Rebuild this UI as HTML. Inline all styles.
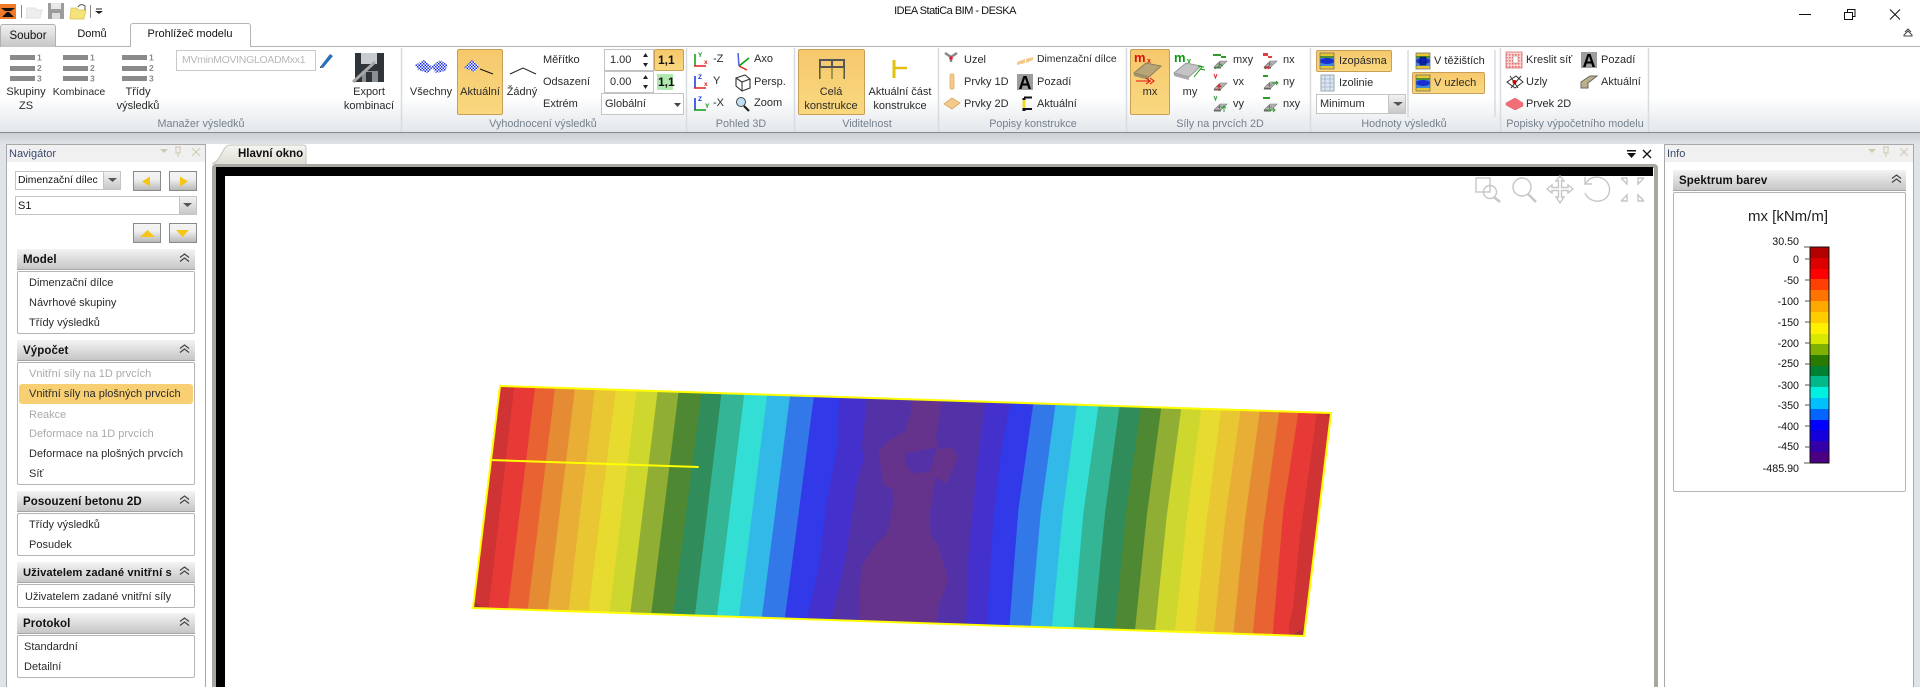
<!DOCTYPE html>
<html lang="cs"><head><meta charset="utf-8"><title>IDEA StatiCa BIM - DESKA</title>
<style>
html,body{margin:0;padding:0;width:1920px;height:687px;overflow:hidden;background:#fff}
body{position:relative;font-family:"Liberation Sans",sans-serif;font-size:11px;color:#222}
div{box-sizing:border-box}
.a{position:absolute}
.t{position:absolute;white-space:nowrap;line-height:14px;font-size:11px;color:#2a2a2a;z-index:5;margin-top:2px}
.c{transform:translateX(-50%)}
.g{color:#75808c;font-size:10.8px}
.n{margin-top:1px;font-size:10.7px;color:#111}
.hl{position:absolute;background:linear-gradient(#f6c86c,#f9d87f);border:1px solid #c99f58;border-radius:2px}
.hd{position:absolute;left:17px;width:178px;height:21px;background:linear-gradient(#f3f3f3,#c6c6c6);border-bottom:1px solid #a5a5a5;font-weight:bold;font-size:11.5px;line-height:22px;padding-left:6px;color:#111;letter-spacing:.1px;white-space:nowrap}
.bx{position:absolute;left:17px;width:178px;background:#fff;border:1px solid #b4b4b4;border-radius:2px}
.btn{position:absolute;background:linear-gradient(#f4f4f4 0,#f0f0f0 40%,#b8b8b8 100%);border:1px solid #8a8a8a;width:28px;height:20px}
.cb{position:absolute;background:#fff;border:1px solid #c4c4c4}
.cbb{position:absolute;right:0;top:0;bottom:0;width:17px;background:linear-gradient(#f2f2f2,#c8c8c8);border-left:1px solid #c4c4c4}
.dis{color:#aaa}
</style></head><body>

<!-- ribbon -->
<div class="a" style="left:0;top:46px;width:1920px;height:1px;background:#b4b4b4"></div>
<div class="a" style="left:0;top:47px;width:1920px;height:85px;background:linear-gradient(#fff 0,#fff 58%,#e3e7eb 100%)"></div>
<div class="a" style="left:0;top:132px;width:1920px;height:1px;background:#868b90"></div>
<div class="a" style="left:0;top:133px;width:1920px;height:554px;background:#e0e4e9"></div>
<div class="a" style="left:0;top:133px;width:1920px;height:11px;background:linear-gradient(#ccd0d3,#e0e4e9)"></div>

<!-- tabs -->
<div class="a" style="left:0;top:24px;width:56px;height:23px;background:linear-gradient(#f0f0f0,#c6c6c6);border:1px solid #b0b0b0;border-bottom:none;border-radius:3px 3px 0 0"></div>
<div class="t c" style="left:28px;top:27px;font-size:11.5px;color:#111">Soubor</div>
<div class="t c" style="left:92px;top:25px;color:#111">Domů</div>
<div class="a" style="left:130px;top:23px;width:121px;height:24px;background:#fff;border:1px solid #b4b4b4;border-bottom:none;border-radius:3px 3px 0 0"></div>
<div class="t c" style="left:190px;top:25px;color:#111">Prohlížeč modelu</div>
<div class="t c" style="left:955px;top:2px;font-size:11px;letter-spacing:-.5px;color:#111">IDEA StatiCa BIM - DESKA</div>

<!-- ribbon highlights -->
<div class="hl" style="left:457px;top:49px;width:46px;height:66px"></div>
<div class="hl" style="left:654px;top:49px;width:30px;height:22px"></div>
<div class="a" style="left:657px;top:74px;width:16px;height:16px;background:#b0e8b0"></div>
<div class="hl" style="left:798px;top:49px;width:67px;height:66px"></div>
<div class="hl" style="left:1130px;top:49px;width:40px;height:66px"></div>
<div class="hl" style="left:1316px;top:50px;width:76px;height:22px"></div>
<div class="hl" style="left:1412px;top:72px;width:73px;height:22px"></div>

<!-- ribbon fields -->
<div class="cb" style="left:176px;top:50px;width:140px;height:21px;border-color:#c8c8c8"></div>
<div class="t" style="left:182px;top:51px;color:#b8b8b8;font-size:10.5px;letter-spacing:-.3px">MVminMOVINGLOADMxx1</div>
<div class="cb" style="left:604px;top:49px;width:50px;height:22px"></div>
<div class="cb" style="left:604px;top:71px;width:50px;height:22px"></div>
<div class="t" style="left:610px;top:51px">1.00</div>
<div class="t" style="left:610px;top:73px">0.00</div>
<div class="t" style="left:658px;top:51px;font-weight:bold;font-size:12px;color:#111">1,1</div>
<div class="t" style="left:658px;top:73px;font-weight:bold;font-size:12px;color:#111">1,1</div>
<div class="cb" style="left:601px;top:93px;width:83px;height:22px"></div>
<div class="t" style="left:605px;top:95px">Globální</div>
<div class="cb" style="left:1316px;top:94px;width:90px;height:20px"><div class="cbb"></div></div>
<div class="t" style="left:1320px;top:95px">Minimum</div>

<!-- ribbon labels -->
<div class="t c" style="left:26px;top:83px">Skupiny</div><div class="t c" style="left:26px;top:97px">ZS</div>
<div class="t c" style="left:79px;top:83px;font-size:10.5px">Kombinace</div>
<div class="t c" style="left:138px;top:83px">Třídy</div><div class="t c" style="left:138px;top:97px">výsledků</div>
<div class="t c" style="left:369px;top:83px">Export</div><div class="t c" style="left:369px;top:97px">kombinací</div>
<div class="t c g" style="left:201px;top:115px">Manažer výsledků</div>
<div class="t c" style="left:431px;top:83px">Všechny</div>
<div class="t c" style="left:480px;top:83px">Aktuální</div>
<div class="t c" style="left:522px;top:83px">Žádný</div>
<div class="t" style="left:543px;top:51px">Měřítko</div>
<div class="t" style="left:543px;top:73px">Odsazení</div>
<div class="t" style="left:543px;top:95px">Extrém</div>
<div class="t c g" style="left:543px;top:115px">Vyhodnocení výsledků</div>
<div class="t" style="left:713px;top:50px">-Z</div>
<div class="t" style="left:713px;top:72px">Y</div>
<div class="t" style="left:713px;top:94px">-X</div>
<div class="t" style="left:754px;top:50px">Axo</div>
<div class="t" style="left:754px;top:73px">Persp.</div>
<div class="t" style="left:754px;top:94px">Zoom</div>
<div class="t c g" style="left:741px;top:115px">Pohled 3D</div>
<div class="t c" style="left:831px;top:83px">Celá</div><div class="t c" style="left:831px;top:97px">konstrukce</div>
<div class="t c" style="left:900px;top:83px">Aktuální část</div><div class="t c" style="left:900px;top:97px">konstrukce</div>
<div class="t c g" style="left:867px;top:115px">Viditelnost</div>
<div class="t" style="left:964px;top:51px">Uzel</div>
<div class="t" style="left:964px;top:73px">Prvky 1D</div>
<div class="t" style="left:964px;top:95px">Prvky 2D</div>
<div class="t" style="left:1037px;top:51px;font-size:10.4px">Dimenzační dílce</div>
<div class="t" style="left:1037px;top:73px">Pozadí</div>
<div class="t" style="left:1037px;top:95px">Aktuální</div>
<div class="t c g" style="left:1033px;top:115px">Popisy konstrukce</div>
<div class="t c" style="left:1150px;top:83px">mx</div>
<div class="t c" style="left:1190px;top:83px">my</div>
<div class="t" style="left:1233px;top:51px">mxy</div>
<div class="t" style="left:1233px;top:73px">vx</div>
<div class="t" style="left:1233px;top:95px">vy</div>
<div class="t" style="left:1283px;top:51px">nx</div>
<div class="t" style="left:1283px;top:73px">ny</div>
<div class="t" style="left:1283px;top:95px">nxy</div>
<div class="t c g" style="left:1220px;top:115px">Síly na prvcích 2D</div>
<div class="t" style="left:1339px;top:52px">Izopásma</div>
<div class="t" style="left:1339px;top:74px">Izolinie</div>
<div class="t c g" style="left:1404px;top:115px">Hodnoty výsledků</div>
<div class="t" style="left:1434px;top:52px">V těžištích</div>
<div class="t" style="left:1434px;top:74px">V uzlech</div>
<div class="t" style="left:1526px;top:51px">Kreslit síť</div>
<div class="t" style="left:1526px;top:73px">Uzly</div>
<div class="t" style="left:1526px;top:95px">Prvek 2D</div>
<div class="t" style="left:1601px;top:51px">Pozadí</div>
<div class="t" style="left:1601px;top:73px">Aktuální</div>
<div class="t c g" style="left:1575px;top:115px">Popisky výpočetního modelu</div>

<!-- left navigator -->
<div class="a" style="left:6px;top:144px;width:200px;height:543px;background:#fff;border:1px solid #a8a8a8;border-bottom:none"></div>
<div class="a" style="left:7px;top:145px;width:198px;height:17px;background:#f0f0f0"></div>
<div class="t" style="left:9px;top:146px;margin-top:1px;color:#3b4a6b">Navigátor</div>
<div class="cb" style="left:15px;top:171px;width:106px;height:19px"><div class="cbb"></div></div>
<div class="t" style="left:18px;top:172px;color:#111;font-size:10.4px">Dimenzační dílec</div>
<div class="cb" style="left:15px;top:196px;width:182px;height:19px"><div class="cbb"></div></div>
<div class="t" style="left:18px;top:197px;color:#111">S1</div>
<div class="btn" style="left:133px;top:171px"></div>
<div class="btn" style="left:169px;top:171px"></div>
<div class="btn" style="left:133px;top:223px"></div>
<div class="btn" style="left:169px;top:223px"></div>

<div class="hd" style="top:249px">Model</div>
<div class="bx" style="top:271px;height:63px"></div>
<div class="t" style="left:29px;top:274px">Dimenzační dílce</div>
<div class="t" style="left:29px;top:294px">Návrhové skupiny</div>
<div class="t" style="left:29px;top:314px">Třídy výsledků</div>

<div class="hd" style="top:340px">Výpočet</div>
<div class="bx" style="top:362px;height:123px"></div>
<div class="a" style="left:19px;top:384px;width:174px;height:20px;background:#f8cf73;border-radius:3px"></div>
<div class="t dis" style="left:29px;top:365px">Vnitřní síly na 1D prvcích</div>
<div class="t" style="left:29px;top:385px">Vnitřní síly na plošných prvcích</div>
<div class="t dis" style="left:29px;top:406px">Reakce</div>
<div class="t dis" style="left:29px;top:425px">Deformace na 1D prvcích</div>
<div class="t" style="left:29px;top:445px">Deformace na plošných prvcích</div>
<div class="t" style="left:29px;top:465px">Síť</div>

<div class="hd" style="top:491px">Posouzení betonu 2D</div>
<div class="bx" style="top:513px;height:43px"></div>
<div class="t" style="left:29px;top:516px">Třídy výsledků</div>
<div class="t" style="left:29px;top:536px">Posudek</div>

<div class="hd" style="top:562px;font-size:11.2px;width:178px">Uživatelem zadané vnitřní s</div>
<div class="bx" style="top:584px;height:24px"></div>
<div class="t" style="left:25px;top:588px">Uživatelem zadané vnitřní síly</div>

<div class="hd" style="top:613px">Protokol</div>
<div class="bx" style="top:635px;height:43px"></div>
<div class="t" style="left:24px;top:638px">Standardní</div>
<div class="t" style="left:24px;top:658px">Detailní</div>

<!-- centre doc area -->
<div class="a" style="left:206px;top:144px;width:1458px;height:543px;background:#fff"></div>
<div class="a" style="left:212px;top:164px;width:1446px;height:523px;background:#fff;border:4px solid #a9a79f;border-bottom:none;border-radius:4px 4px 0 0"></div>
<div class="a" style="left:216px;top:167px;width:1437px;height:9px;background:#000"></div>
<div class="a" style="left:216px;top:167px;width:9px;height:520px;background:#000"></div>
<div class="t" style="left:238px;top:147px;margin-top:0;font-weight:bold;color:#111;font-size:11.5px;z-index:6">Hlavní okno</div>

<!-- right info -->
<div class="a" style="left:1664px;top:144px;width:250px;height:543px;background:#fff;border:1px solid #a8a8a8;border-bottom:none"></div>
<div class="a" style="left:1665px;top:145px;width:248px;height:17px;background:#f0f0f0"></div>
<div class="t" style="left:1667px;top:147px;margin-top:0;color:#3b4a6b">Info</div>
<div class="hd" style="left:1673px;top:170px;width:233px">Spektrum barev</div>
<div class="a" style="left:1673px;top:192px;width:233px;height:300px;background:#fff;border:1px solid #b4b4b4;border-radius:2px"></div>
<div class="t c" style="left:1788px;top:209px;margin-top:0;font-size:15px;line-height:16px;color:#222">mx [kNm/m]</div>
<div class="t n" style="right:121px;top:234px">30.50</div>
<div class="t n" style="right:121px;top:252px">0</div>
<div class="t n" style="right:121px;top:273px">-50</div>
<div class="t n" style="right:121px;top:294px">-100</div>
<div class="t n" style="right:121px;top:315px">-150</div>
<div class="t n" style="right:121px;top:336px">-200</div>
<div class="t n" style="right:121px;top:356px">-250</div>
<div class="t n" style="right:121px;top:378px">-300</div>
<div class="t n" style="right:121px;top:398px">-350</div>
<div class="t n" style="right:121px;top:419px">-400</div>
<div class="t n" style="right:121px;top:439px">-450</div>
<div class="t n" style="right:121px;top:461px">-485.90</div>

<svg class="a" style="left:0;top:0;z-index:3" width="1920" height="687" viewBox="0 0 1920 687" font-family="Liberation Sans,sans-serif">
<defs>
<clipPath id="pl"><polygon points="500,386 1331,413 1304,636 473,608"/></clipPath>
<pattern id="chk" width="3" height="3" patternUnits="userSpaceOnUse"><rect width="3" height="3" fill="#fff"/><rect width="1.5" height="1.5" fill="#1a2fe0"/><rect x="1.5" y="1.5" width="1.5" height="1.5" fill="#1a2fe0"/></pattern>
<pattern id="grid" width="3" height="3" patternUnits="userSpaceOnUse"><rect width="3" height="3" fill="#fbd0d0"/><rect width="1.5" height="1.5" fill="#ee6a6a"/></pattern>
<linearGradient id="tabg" x1="0" y1="0" x2="0" y2="1"><stop offset="0" stop-color="#f6f6f2"/><stop offset="1" stop-color="#dedcd4"/></linearGradient>
<g id="bars"><g fill="#8a8a8a"><rect x="0" y="0" width="25" height="5"/><rect x="0" y="11" width="25" height="5"/><rect x="0" y="21" width="25" height="5"/></g></g>
<g id="chev"><path d="M0,4.500L4.500,1 9,4.500M0,8.500L4.500,5 9,8.500" fill="none" stroke="#444" stroke-width="1.200"/></g>
<g id="mini"><polygon points="1,13 7,7 14,7 8,13" fill="#b4b4b4" stroke="#777" stroke-width=".6"/><path d="M1,13h7v1.500H1z" fill="#666"/><path d="M4,10h5M6.500,8v4" stroke="#555" stroke-width=".6"/></g>
<g id="colmap"><rect width="14" height="16" fill="#3d8ad8"/><rect y="0" width="14" height="3" fill="#e8c733"/><rect y="3" width="14" height="2" fill="#4f8f33"/><ellipse cx="7" cy="8" rx="7" ry="3" fill="#1a2fd0"/><rect y="13" width="14" height="3" fill="#e8c733"/><rect width="14" height="16" fill="none" stroke="#666" stroke-width=".7"/></g>
</defs>

<!-- group separators -->
<g stroke="#d8dbdf" stroke-width="1.5"><path d="M401.500,48V132M686.500,48V132M794.500,48V132M938.500,48V132M1126.500,48V132M1310.500,48V132M1500.500,48V132M1648.500,48V132"/><path d="M1408,50V117M1495,50V117"/></g>

<!-- QAT -->
<rect x="0" y="4" width="16" height="15" fill="#f07a2a"/><path d="M1,8h14l-4,3h-6zM2,17l5,-5h2l5,5z" fill="#111"/>
<path d="M21.500,5V18M90.500,5V18" stroke="#888"/>
<path d="M27,8h8l2,2h5l-2,8H26z" fill="#eee" stroke="#e2e2e2"/>
<rect x="48" y="3" width="16" height="16" fill="#9c9c9c"/><rect x="51" y="3" width="10" height="6" fill="#e8e8e8"/><rect x="52" y="13" width="8" height="6" fill="#dedede"/>
<path d="M71,8h6l1,2h8l-2,9H70z" fill="#f6e27a" stroke="#d8c050" stroke-width=".7"/><path d="M78,7c2,-3 5,-3 7,-1v4" fill="none" stroke="#555"/>
<path d="M96,9h6" stroke="#222"/><path d="M95,11h8l-4,3z" fill="#222"/>

<!-- window -->
<path d="M1799,14.500h12" stroke="#111"/>
<path d="M1844.500,12.500h8v7h-8zM1847.500,12V9.500h7.500v7h-2" fill="none" stroke="#111"/>
<path d="M1890,9.500l10,10M1900,9.500l-10,10" stroke="#111" stroke-width="1"/>
<path d="M1904,35l4,-4 4,4v1h-8zM1905,32l3,-3 3,3" fill="none" stroke="#444"/>

<!-- manager icons -->
<use href="#bars" x="10" y="55"/><use href="#bars" x="63" y="55"/><use href="#bars" x="122" y="55"/>
<g font-size="8.500" font-weight="bold" fill="#8a8a8a"><text x="37" y="60.500">1</text><text x="37" y="71">2</text><text x="37" y="81.500">3</text><text x="90" y="60.500">1</text><text x="90" y="71">2</text><text x="90" y="81.500">3</text><text x="149" y="60.500">1</text><text x="149" y="71">2</text><text x="149" y="81.500">3</text></g>
<path d="M320,67l10,-13 3,2 -10,12z" fill="#2a70b8"/><path d="M320,68l0,-1 2,1z" fill="#111"/>
<path d="M355,53h29v29h-29z" fill="#2f3438"/><rect x="361" y="53" width="16" height="11" fill="#c9ccce"/><rect x="362" y="71" width="16" height="11" fill="#8c8f92"/><rect x="366" y="72" width="6" height="10" fill="#2f3438"/><path d="M353,82l22,-20" stroke="#a8a8a8" stroke-width="3"/>

<!-- results -->
<path d="M415,65l9,-5 9,7 -5,6 -10,-3z" fill="url(#chk)"/><path d="M431,67l9,-7 8,5 -3,6 -9,2z" fill="url(#chk)"/>
<path d="M464,68l8,-8 7,6 -4,6z" fill="url(#chk)"/>
<path d="M480,69l13,5" stroke="#111"/>
<path d="M510,74l13,-6 13,6" fill="none" stroke="#222"/>
<path d="M643,57l2.500,-4 2.500,4zM643,63l2.500,4 2.500,-4zM643,79l2.500,-4 2.500,4zM643,85l2.500,4 2.500,-4z" fill="#222"/>
<path d="M674,103h7l-3.500,4z" fill="#444"/>

<!-- view icons -->
<g stroke-width="1.500" fill="none"><path d="M695,54V66" stroke="#0a9a0a"/><path d="M694,66h12" stroke="#e02020"/><path d="M695,76V88" stroke="#1030e0"/><path d="M694,88h12" stroke="#e02020"/><path d="M695,98V110" stroke="#1030e0"/><path d="M694,110h12" stroke="#0a9a0a"/>
<path d="M739,66l-1,-13" stroke="#5060e0"/><path d="M739,66l10,-8" stroke="#0a9a0a"/><path d="M739,66l8,4" stroke="#e02020"/></g>
<circle cx="741" cy="102" r="4.500" fill="#bfe0f4" stroke="#444"/><path d="M744,106l5,5" stroke="#222" stroke-width="2.200"/>
<path d="M736,78l9,-3 5,4v9l-8,3 -6,-5zM736,78l6,4 8,-3M742,82v9" fill="none" stroke="#333" stroke-width="1.100"/>
<g font-size="6.500" font-weight="bold"><text x="698" y="57" fill="#0a9a0a">Y</text><text x="704" y="64" fill="#e02020">x</text><text x="698" y="79" fill="#1030e0">Z</text><text x="704" y="86" fill="#e02020">x</text><text x="698" y="101" fill="#1030e0">Z</text><text x="705" y="108" fill="#0a9a0a">Y</text></g>

<!-- visibility -->
<path d="M820,79V60h24v19M832,79V60M820,67h24" fill="none" stroke="#555" stroke-width="2"/><path d="M821,79V68M843,79V68M832,79V68" stroke="#ead23a" stroke-width="1"/>
<path d="M894,60V78" stroke="#e0c010" stroke-width="3"/><path d="M895,68h12" stroke="#e0c010" stroke-width="2.500"/>

<!-- popisy -->
<path d="M945,53l6,4 6,-4M951,57v5" stroke="#888" stroke-width="2.500" fill="none"/><circle cx="951" cy="58" r="1.800" fill="#e02030"/>
<rect x="950" y="74" width="4" height="15" rx="1.500" fill="#f5cc90" stroke="#dda050" stroke-width=".7"/>
<path d="M944,104l8,-6 8,5 -8,6z" fill="#f4c989" stroke="#d8a45e" stroke-width=".8"/>
<path d="M1017,62l8,-3v4l-8,2zM1026,59l7,-2v3l-7,3z" fill="#f5c78a"/>
<rect x="1017" y="74" width="16" height="16" fill="#9d9d9d"/>
<text x="1025" y="89" text-anchor="middle" font-size="18" font-weight="bold" fill="#000">A</text>
<path d="M1024,98V111" stroke="#111" stroke-width="3"/><path d="M1024,100V108" stroke="#f0dc1c" stroke-width="3"/><path d="M1024,97.500h8M1024,109h8" stroke="#111" stroke-width="2"/>

<!-- forces -->
<text x="1134" y="62" font-size="13" font-weight="bold" fill="#e01010">m</text><text x="1147" y="63" font-size="7" font-weight="bold" fill="#e01010">x</text>
<polygon points="1134,73 1146,63 1161,66 1149,77" fill="#b8a578" stroke="#8c7d5c"/><polygon points="1134,73 1149,77 1149,80 1134,76" fill="#a19168"/>
<path d="M1136,81h15" stroke="#e01010"/><path d="M1146,78l4,3 -4,3M1150,78l4,3 -4,3" fill="none" stroke="#e01010"/>
<text x="1174" y="62" font-size="13" font-weight="bold" fill="#0a9a0a">m</text><text x="1187" y="63" font-size="7" font-weight="bold" fill="#0a9a0a">y</text>
<polygon points="1174,73 1186,63 1201,66 1189,77" fill="#c4c4c4" stroke="#999"/><polygon points="1174,73 1189,77 1189,80 1174,76" fill="#aaa"/>
<path d="M1194,77l8,-10M1198,66l6,1M1200,69l5,1" stroke="#0a9a0a" fill="none"/>

<use href="#mini" x="1213" y="54"/><use href="#mini" x="1213" y="76"/><use href="#mini" x="1213" y="97"/>
<use href="#mini" x="1263" y="54"/><use href="#mini" x="1263" y="75"/><use href="#mini" x="1263" y="97"/>
<!-- mxy --><path d="M1213,54h8v2h-8zM1221,56h5v2h-5z" fill="#2e9a2e"/><path d="M1215,69l5,-4M1219,64l4,2" stroke="#2e9a2e" fill="none"/>
<!-- vx --><path d="M1214,74l1.500,4 1.500,-4" stroke="#e02020" fill="none"/><path d="M1219,84v7M1217,87l2,-2 2,2" stroke="#e02020" fill="none"/>
<!-- vy --><path d="M1214,96l1.500,4 1.500,-4" stroke="#2e9a2e" fill="none"/><path d="M1224,112v-6M1222,108l2,-2 2,2" stroke="#2e9a2e" fill="none"/>
<!-- nx --><path d="M1263,53h5v3h-5zM1268,56h4v2h-4z" fill="#e04040"/><path d="M1265,69l4,-3M1265,66l4,3" stroke="#e02020" fill="none"/>
<!-- ny --><path d="M1263,75h5v2h-5z" fill="#2e9a2e"/><path d="M1272,83h6M1276,81l2,2 -2,2" stroke="#2e9a2e" fill="none"/>
<!-- nxy --><path d="M1263,97h7v2h-7z" fill="#2e9a2e"/><path d="M1265,110h10M1273,108l2,2 -2,2" stroke="#2e9a2e" fill="none"/>

<!-- values -->
<use href="#colmap" x="1320" y="53"/>
<rect x="1321" y="75" width="13" height="16" fill="#dde6f0" stroke="#9aa"/><path d="M1321,79h13M1321,83h13M1321,87h13M1325,75v16M1330,75v16" stroke="#8a9fc8" stroke-width=".6"/>
<path d="M1393,102h10l-5,4z" fill="#555"/>
<use href="#colmap" x="1416" y="53"/><rect x="1420" y="57" width="6" height="8" fill="#0b1fb0" stroke="#111" stroke-width=".5"/>
<use href="#colmap" x="1416" y="75"/>
<rect x="1506" y="52" width="16" height="16" fill="url(#grid)" stroke="#d88"/><rect x="1513" y="56" width="5" height="7" fill="#fff" stroke="#888" stroke-width=".5"/>
<path d="M1507,82l9,-6 7,6 -8,6zM1510,76l8,12M1521,76l-10,12" fill="none" stroke="#333"/><circle cx="1514.500" cy="82" r="2" fill="#c00"/>
<path d="M1506,103l9,-5 8,5v3l-8,4 -9,-5z" fill="#f36f78" stroke="#e0505a" stroke-width=".5"/>
<rect x="1581" y="52" width="16" height="16" fill="#9d9d9d"/>
<text x="1589" y="67" text-anchor="middle" font-size="18" font-weight="bold" fill="#000">A</text>
<path d="M1581,82l9,-6h7l-9,7v5h-7z" fill="#bcb08a" stroke="#666"/>

<!-- nav icons -->
<path d="M142,181.500l8,-5v10z" fill="#f5c518"/><path d="M188,181.500l-8,-5v10z" fill="#f5c518"/>
<path d="M147.500,230l7.500,7h-15z" fill="#f5c518"/><path d="M182.500,237l6.500,-7h-13z" fill="#f5c518"/>
<path d="M108,178h9l-4.500,4z" fill="#555"/><path d="M183,203h9l-4.500,4z" fill="#555"/>
<path d="M160,149h8l-4,4z" fill="#cfc9b0"/><path d="M175,147h6M176,147v6h4v-6M178,153v4" fill="none" stroke="#cfc9b0"/><path d="M192,148l8,8M200,148l-8,8" stroke="#cfc9b0"/>
<path d="M1868,149h8l-4,4z" fill="#cfc9b0"/><path d="M1883,147h6M1884,147v6h4v-6M1886,153v4" fill="none" stroke="#cfc9b0"/><path d="M1900,148l8,8M1908,148l-8,8" stroke="#cfc9b0"/>
<use href="#chev" x="180" y="253"/><use href="#chev" x="180" y="344"/><use href="#chev" x="180" y="495"/><use href="#chev" x="180" y="566"/><use href="#chev" x="180" y="617"/><use href="#chev" x="1892" y="174"/>

<!-- doc tab -->
<path d="M212,164c4,-2 6,-4 10,-11 3,-6 5,-8 9,-8h72q3,0 3,3v16" fill="url(#tabg)" stroke="#c4c3bb"/>
<path d="M1627,150h9v1.500h-9zM1627,153h9l-4.500,5z" fill="#111"/>
<path d="M1643,150l8,8M1651,150l-8,8" stroke="#111" stroke-width="1.300"/>

<!-- canvas tools -->
<g fill="none" stroke="#c6c6c6" stroke-width="1.400">
<rect x="1476" y="178" width="14" height="14"/><circle cx="1490" cy="192" r="6.500"/><path d="M1494,197l6,5" stroke-width="2.500"/>
<circle cx="1522" cy="187" r="9"/><path d="M1528,194l8,8" stroke-width="2.500"/>
<path d="M1560,176l4,5h-2.500v6.500H1568V185l5,4 -5,4v-2.500h-6.500V197h2.500l-4,6 -4,-6h2.500v-6.500H1552V193l-5,-4 5,-4v2.500h6.500V181H1556z"/>
<path d="M1586,183c4,-7 14,-8 20,-2s4,16 -3,19 -15,0 -18,-7M1585,177v7h7"/>
<path d="M1621,178h6v6l-6,-6M1644,178h-6v6l6,-6M1621,201h6v-6l-6,6M1644,201h-6v-6l6,6"/>
</g>

<!-- plate -->
<g clip-path="url(#pl)">
<rect x="460" y="380" width="900" height="270" fill="#cf3333"/>
<polygon fill="#e73a36" points="515,380 485,640 1400,640 1400,380"/>
<polygon fill="#e96232" points="536,380 504,640 1400,640 1400,380"/>
<polygon fill="#e58b33" points="556,380 524,640 1400,640 1400,380"/>
<polygon fill="#e8ae35" points="576,380 544,640 1400,640 1400,380"/>
<polygon fill="#e8c733" points="596,380 565,640 1400,640 1400,380"/>
<polygon fill="#e8db30" points="617,380 585,640 1400,640 1400,380"/>
<polygon fill="#cdd72e" points="638,380 606,640 1400,640 1400,380"/>
<polygon fill="#90ae33" points="659,380 627,640 1400,640 1400,380"/>
<polygon fill="#4f8833" points="680,380 648,640 1400,640 1400,380"/>
<polygon fill="#308c5a" points="703,380 670,640 1400,640 1400,380"/>
<polygon fill="#33b596" points="723,380 692,640 1400,640 1400,380"/>
<polygon fill="#33dfd5" points="746,380 714,640 1400,640 1400,380"/>
<polygon fill="#33b9e8" points="769,380 736,640 1400,640 1400,380"/>
<polygon fill="#3278e8" points="792,380 759,640 1400,640 1400,380"/>
<polygon fill="#3239e8" points="816,380 782,640 1400,640 1400,380"/>
<polygon fill="#4430cc" points="840,380 839.300,398 836.700,450 826.700,503 818.300,570 807.300,618 804,640 1400,640 1400,380"/>
<polygon fill="#5332a8" points="868,380 866.700,400 861.700,447 864,458 856.700,483 850,530 843.300,570 831.700,618 827,640 1400,640 1400,380"/>
<g transform="translate(880,370) scale(.33333)">
<polygon fill="#66338c" points="98,60 98,90 90,140 75,185 30,210 -5,245 10,345 35,355 42,400 20,490 -15,525 -55,590 -60,650 -63,750 -65,820 172,820 172,760 175,710 205,630 175,530 150,490 150,420 165,335 175,238 168,205 185,92 188,60"/>
<polygon fill="#5332a8" points="75,250 170,232 150,305 100,310 80,290"/>
<polygon fill="#66338c" points="175,238 215,232 235,260 200,340 150,310"/>
<polygon fill="#4430cc" points="318,60 315,98 290,300 265,560 258,765 258,820 1500,820 1500,60"/>
<polygon fill="#3239e8" points="395,60 390,100 360,270 340,450 325,680 323,820 1500,820 1500,60"/>
<polygon fill="#3278e8" points="465,60 460,100 415,420 388,770 386,820 1500,820 1500,60"/>
<polygon fill="#33b9e8" points="532,60 527,100 482,430 452,770 450,820 1500,820 1500,60"/>
<polygon fill="#33dfd5" points="596,60 591,105 548,430 516,770 514,820 1500,820 1500,60"/>
<polygon fill="#33b596" points="660,60 655,110 610,430 580,775 578,820 1500,820 1500,60"/>
<polygon fill="#308c5a" points="723,60 718,112 675,430 642,775 638,820 1500,820 1500,60"/>
<polygon fill="#4f8833" points="787,60 782,115 738,430 705,778 700,820 1500,820 1500,60"/>
<polygon fill="#90ae33" points="848,60 843,118 800,440 765,782 761,820 1500,820 1500,60"/>
<polygon fill="#cdd72e" points="908,60 903,120 860,440 825,785 821,820 1500,820 1500,60"/>
<polygon fill="#e8db30" points="968,60 963,122 920,450 885,785 881,820 1500,820 1500,60"/>
<polygon fill="#e8c733" points="1028,60 1023,122 980,450 945,788 941,820 1500,820 1500,60"/>
<polygon fill="#e8ae35" points="1086,60 1081,125 1035,450 1002,790 998,820 1500,820 1500,60"/>
<polygon fill="#e58b33" points="1144,60 1139,125 1095,450 1060,792 1056,820 1500,820 1500,60"/>
<polygon fill="#e96232" points="1202,60 1197,128 1150,470 1118,795 1114,820 1500,820 1500,60"/>
<polygon fill="#e73a36" points="1260,60 1255,128 1210,420 1178,795 1174,820 1500,820 1500,60"/>
<polygon fill="#cf3333" points="1315,60 1310,130 1260,500 1238,720 1227,765 1227,820 1500,820 1500,60"/>
<polygon fill="#a83038" points="1335,125 1352,125 1352,155"/>
<polygon fill="#a83038" points="1227,800 1272,800 1272,775"/>
</g>
<polygon fill="#a83038" points="473,600 485,610 472,612"/>
</g>
<polygon points="500,386 1331,413 1304,636 473,608" fill="none" stroke="#ffff00" stroke-width="2"/>
<path d="M490.700,460L698.700,467" stroke="#ffff00" stroke-width="2"/>

<!-- legend -->
<g shape-rendering="crispEdges">
<rect x="1810" y="247" width="19" height="11" fill="#b30000"/>
<rect x="1810" y="258" width="19" height="11" fill="#dc0000"/>
<rect x="1810" y="269" width="19" height="10" fill="#ff0000"/>
<rect x="1810" y="279" width="19" height="11" fill="#ff4000"/>
<rect x="1810" y="290" width="19" height="11" fill="#ff7300"/>
<rect x="1810" y="301" width="19" height="11" fill="#ffa800"/>
<rect x="1810" y="312" width="19" height="11" fill="#ffcc00"/>
<rect x="1810" y="323" width="19" height="11" fill="#fff000"/>
<rect x="1810" y="334" width="19" height="10" fill="#d9e800"/>
<rect x="1810" y="344" width="19" height="11" fill="#80b000"/>
<rect x="1810" y="355" width="19" height="11" fill="#2a7a00"/>
<rect x="1810" y="366" width="19" height="10" fill="#008033"/>
<rect x="1810" y="376" width="19" height="11" fill="#00b88a"/>
<rect x="1810" y="387" width="19" height="11" fill="#00f0e0"/>
<rect x="1810" y="398" width="19" height="11" fill="#00c0ff"/>
<rect x="1810" y="409" width="19" height="11" fill="#0066ff"/>
<rect x="1810" y="420" width="19" height="10" fill="#0000ff"/>
<rect x="1810" y="430" width="19" height="11" fill="#1400dc"/>
<rect x="1810" y="441" width="19" height="11" fill="#3300aa"/>
<rect x="1810" y="452" width="19" height="11" fill="#4b0082"/>
<rect x="1810" y="247" width="19" height="216" fill="none" stroke="#111"/>
<path d="M1804,247h6M1805,259h5M1805,280h5M1805,301h5M1805,322h5M1805,343h5M1805,364h5M1805,385h5M1805,405h5M1805,426h5M1805,447h5M1804,463h6" stroke="#555"/>
</g>
</svg>
</body></html>
